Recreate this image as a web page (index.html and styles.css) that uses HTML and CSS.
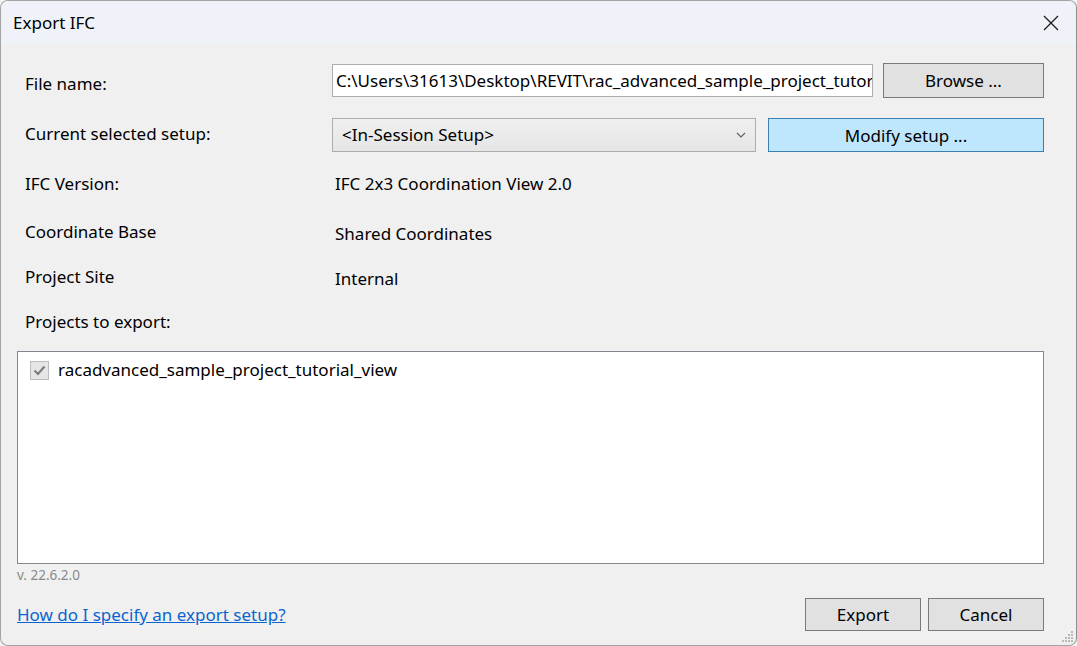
FILE: index.html
```html
<!DOCTYPE html>
<html lang="en">
<head>
<meta charset="utf-8">
<title>Export IFC</title>
<link rel="stylesheet" href="styles.css">
</head>
<body>
<div class="window">
  <div class="titlebar">
    <span class="title">Export IFC</span>
    <svg class="close" width="16" height="16" viewBox="0 0 16 16"><path d="M1 1 L15 15 M15 1 L1 15" stroke="#1b1b1b" stroke-width="1.3" fill="none"/></svg>
  </div>
  <div class="content">
    <div class="row row-file">
      <span class="label label-file">File name:</span>
      <div class="textbox">C:\Users\31613\Desktop\REVIT\rac_advanced_sample_project_tutor</div>
      <button class="btn btn-browse">Browse ...</button>
    </div>
    <div class="row row-setup">
      <span class="label label-setup">Current selected setup:</span>
      <div class="combo">
        <span class="combo-text">&lt;In-Session Setup&gt;</span>
        <svg class="chevron" width="10" height="6" viewBox="0 0 10 6"><path d="M1 1 L5 5 L9 1" stroke="#606060" stroke-width="1.2" fill="none"/></svg>
      </div>
      <button class="btn btn-hot btn-modify">Modify setup ...</button>
    </div>
    <div class="info info-version">
      <span class="label">IFC Version:</span>
      <span class="value">IFC 2x3 Coordination View 2.0</span>
    </div>
    <div class="info info-coord">
      <span class="label">Coordinate Base</span>
      <span class="value value-low">Shared Coordinates</span>
    </div>
    <div class="info info-site">
      <span class="label">Project Site</span>
      <span class="value value-low">Internal</span>
    </div>
    <div class="info info-projects">
      <span class="label">Projects to export:</span>
    </div>
    <div class="listbox">
      <div class="item">
        <span class="checkbox"><svg width="17" height="17" viewBox="0 0 17 17"><path d="M3.5 8.5 L7 12 L13.5 4.5" stroke="#7d7d7d" stroke-width="2.2" fill="none"/></svg></span>
        <span class="item-text">racadvanced_sample_project_tutorial_view</span>
      </div>
    </div>
    <div class="version">v. 22.6.2.0</div>
    <div class="footer">
      <a class="link" href="#">How do I specify an export setup?</a>
      <div class="buttons">
        <button class="btn btn-dialog">Export</button>
        <button class="btn btn-dialog">Cancel</button>
      </div>
    </div>
  </div>
  <svg class="grip" width="14" height="14" viewBox="0 0 14 14">
    <g fill="#b9b9b9">
      <rect x="11" y="2" width="2" height="2"/>
      <rect x="8" y="5" width="2" height="2"/><rect x="11" y="5" width="2" height="2"/>
      <rect x="5" y="8" width="2" height="2"/><rect x="8" y="8" width="2" height="2"/><rect x="11" y="8" width="2" height="2"/>
      <rect x="2" y="11" width="2" height="2"/><rect x="5" y="11" width="2" height="2"/><rect x="8" y="11" width="2" height="2"/><rect x="11" y="11" width="2" height="2"/>
    </g>
  </svg>
</div>
</body>
</html>
```

FILE: styles.css
```css
html, body {
  margin: 0;
  padding: 0;
  background: #f3f3f3;
}
body {
  font-family: "Noto Sans", "Open Sans", sans-serif;
  font-size: 17px;
  color: #000;
}
.window {
  position: relative;
  width: 1077px;
  height: 646px;
  box-sizing: border-box;
  border: 1px solid #a3a3a3;
  border-right-color: #8f8f8f;
  border-radius: 8px;
  overflow: hidden;
  display: flex;
  flex-direction: column;
  background: #f0f0f0;
}
.titlebar {
  height: 43px;
  flex: none;
  background: #eff3f9;
  display: flex;
  align-items: center;
  justify-content: space-between;
  padding: 0 17px 0 12px;
}
.title {
  font-size: 17px;
  color: #000;
}
.close {
  display: block;
}
.content {
  flex: 1;
  display: flex;
  flex-direction: column;
  padding: 19px 32px 0 16px;
}
.row {
  display: flex;
  align-items: center;
}
.row-file {
  height: 35px;
}
.row-setup {
  height: 34px;
  margin-top: 20px;
}
.label {
  width: 315px;
  box-sizing: border-box;
  padding-left: 8px;
  flex: none;
}
.label-file {
  padding-top: 6px;
}
.label-setup {
  padding-bottom: 3px;
}
.textbox {
  width: 541px;
  height: 33px;
  box-sizing: border-box;
  border: 1px solid #abadb3;
  background: #fff;
  padding: 0 3px;
  line-height: 31px;
  overflow: hidden;
  white-space: nowrap;
}
.btn {
  font-family: inherit;
  font-size: 17px;
  color: #000;
  background: #e1e1e1;
  border: 1px solid #7a7a7a;
  box-sizing: border-box;
  padding: 0;
  margin: 0;
}
.btn-browse {
  margin-left: 10px;
  width: 161px;
  height: 35px;
}
.combo {
  width: 424px;
  height: 34px;
  box-sizing: border-box;
  border: 1px solid #acacac;
  background: linear-gradient(#f0f0f0, #e5e5e5);
  display: flex;
  align-items: center;
  justify-content: space-between;
  padding: 0 9px 1px 9px;
}
.chevron {
  display: block;
}
.btn-hot {
  background: #bee6fd;
  border-color: #3c7fb1;
}
.btn-modify {
  margin-left: 12px;
  width: 276px;
  height: 34px;
}
.info {
  display: flex;
  align-items: center;
  height: 22px;
}
.info-version { margin-top: 20px; }
.info-coord { margin-top: 26px; }
.info-site { margin-top: 23px; }
.info-projects { margin-top: 23px; }
.value {
  padding-left: 3px;
}
.value-low {
  padding-top: 4px;
}
.listbox {
  margin-top: 19px;
  height: 213px;
  box-sizing: border-box;
  border: 1px solid #828790;
  background: #fff;
  padding: 6px 12px;
}
.item {
  display: flex;
  align-items: center;
}
.item-text {
  padding-bottom: 2px;
}
.checkbox {
  width: 19px;
  height: 19px;
  box-sizing: border-box;
  border: 1px solid #bcbcbc;
  background: #e6e6e6;
  display: flex;
  align-items: center;
  justify-content: center;
  margin-right: 9px;
  flex: none;
}
.checkbox svg {
  display: block;
}
.version {
  margin-top: 2px;
  font-size: 13.5px;
  line-height: 18px;
  color: #8a8a8a;
}
.footer {
  margin-top: 14px;
  height: 33px;
  display: flex;
  align-items: center;
  justify-content: space-between;
}
.link {
  color: #0a64cf;
  text-decoration: underline;
}
.buttons {
  display: flex;
  gap: 7px;
}
.btn-dialog {
  width: 116px;
  height: 33px;
}
.grip {
  position: absolute;
  right: 2px;
  bottom: 2px;
}
```
